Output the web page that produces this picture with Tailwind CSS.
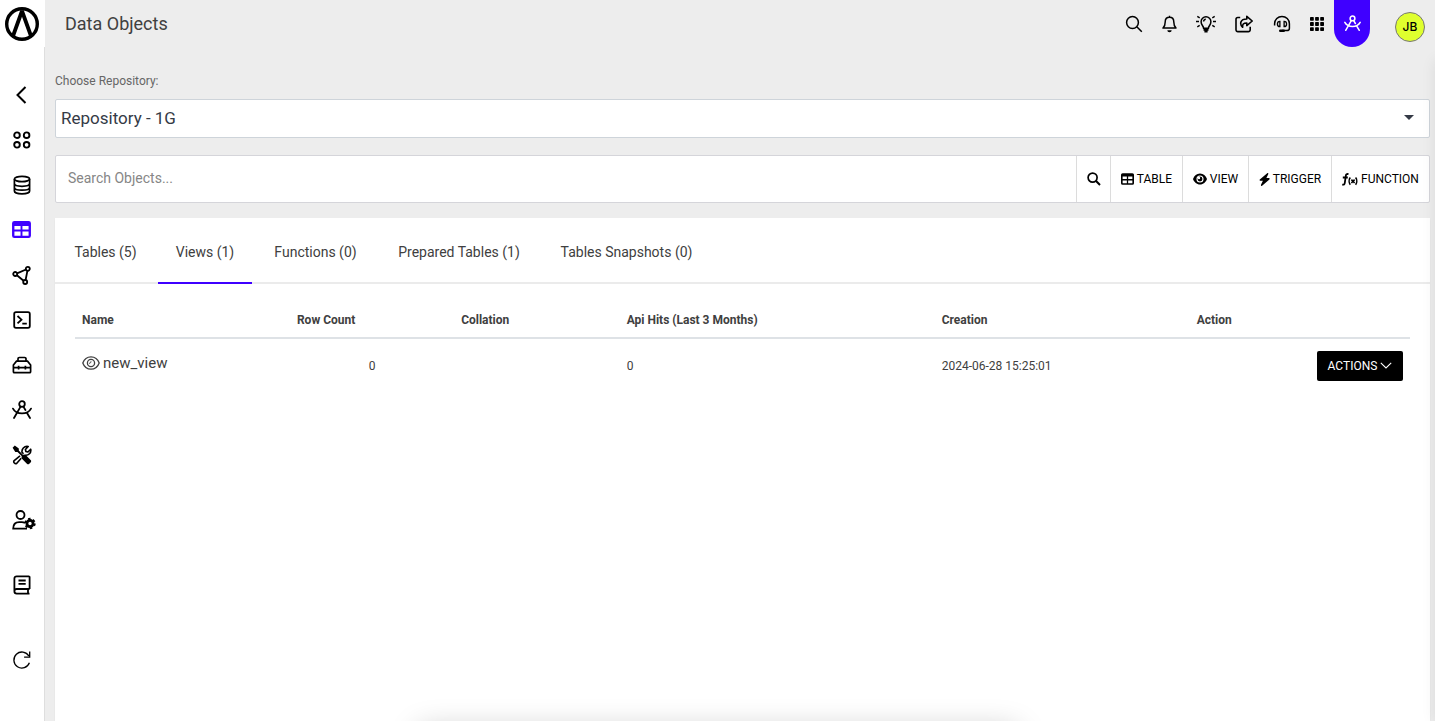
<!DOCTYPE html>
<html lang="en">
<head>
<meta charset="utf-8">
<meta name="viewport" content="width=device-width, initial-scale=1">
<title>Data Objects</title>
<script src="https://cdn.jsdelivr.net/npm/@tailwindcss/browser@4"></script>
</head>
<body class="relative flex min-h-screen overflow-hidden bg-[#ededed] font-['Roboto',sans-serif] text-[#404040]">

<!-- Shared shapes -->
<svg class="hidden" aria-hidden="true">
  <symbol id="compass" viewBox="0 0 20 20"><g fill="none" stroke="currentColor" stroke-width="1.8" stroke-linecap="round"><circle cx="10" cy="4" r="2.8"/><path d="M8.6 6.6 2 18M11.4 6.6l2 3.4M15 13l3 5M1 8.6c1.600 3 5 4.800 9 4.800s7.400-1.800 9-4.800"/></g></symbol>
  <symbol id="table" viewBox="0 0 20 18"><path fill="currentColor" fill-rule="evenodd" d="M2.500 0h15A2.500 2.500 0 0 1 20 2.500v13a2.500 2.500 0 0 1-2.500 2.500h-15A2.500 2.500 0 0 1 0 15.500v-13A2.500 2.500 0 0 1 2.500 0ZM2.500 5.200v3.800H9V5.200Zm8.500 0v3.800h6.500V5.200ZM2.500 11.200v4.300H9v-4.300Zm8.500 0v4.300h6.500v-4.300Z"/></symbol>
</svg>

<aside class="flex w-[45px] shrink-0 flex-col bg-white">
  <a href="#" aria-label="Home" class="flex h-[47px] items-center pl-[5px]">
    <svg class="size-[34px]" viewBox="0 0 34 34" fill="none" stroke="#000"><circle cx="17" cy="17" r="15.300" stroke-width="3.400"/><path d="M8 29 17 4l9 25" stroke-width="3.800" stroke-linejoin="bevel"/></svg>
  </a>
  <nav class="flex grow flex-col items-center border-r border-[#dedede] pt-[25px] pr-px text-black">
    <button aria-label="Collapse menu" class="flex h-[45px] w-full items-center justify-center"><svg class="size-5" viewBox="0 0 20 20" fill="none" stroke="currentColor" stroke-width="2"><path d="m13.500 2-8 8 8 8"/></svg></button>
    <a href="#" aria-label="Dashboard" class="flex h-[45px] w-full items-center justify-center"><svg class="size-5" viewBox="0 0 20 20" fill="none" stroke="currentColor" stroke-width="1.900"><circle cx="5" cy="5.200" r="2.800"/><circle cx="14.600" cy="5.200" r="2.800"/><circle cx="5" cy="14.800" r="2.800"/><circle cx="14.600" cy="14.800" r="2.800"/></svg></a>
    <a href="#" aria-label="Databases" class="flex h-[45px] w-full items-center justify-center"><svg class="size-5" viewBox="0 0 20 20" fill="none" stroke="currentColor" stroke-width="1.700"><ellipse cx="10" cy="4" rx="7.600" ry="2.700"/><path d="M2.400 4v12c0 1.600 3.400 2.900 7.600 2.900s7.600-1.300 7.600-2.900V4M2.400 8.600c0 1.600 3.400 2.700 7.600 2.700s7.600-1.100 7.600-2.700M2.400 12.500c0 1.600 3.400 2.700 7.600 2.700s7.600-1.100 7.600-2.700"/></svg></a>
    <a href="#" aria-label="Data objects" aria-current="page" class="flex h-[45px] w-full items-center justify-center text-[#3f00ff]"><svg class="h-[17px] w-[19px]"><use href="#table"/></svg></a>
    <a href="#" aria-label="Schema" class="flex h-[45px] w-full items-center justify-center"><svg class="size-5" viewBox="0 0 20 20" fill="none" stroke="currentColor" stroke-width="1.800"><circle cx="3.200" cy="9" r="2"/><circle cx="15.800" cy="3.800" r="2"/><circle cx="13.200" cy="17" r="2"/><path d="m5 8.300 9-3.800M15.400 5.800 13.600 15M4.900 10.200l6.700 5.600"/></svg></a>
    <a href="#" aria-label="Query" class="flex h-[45px] w-full items-center justify-center"><svg class="size-5" viewBox="0 0 20 20" fill="none" stroke="currentColor" stroke-width="1.800"><rect x="2.200" y="2.200" width="15.600" height="15.600" rx="1.800"/><path d="m5.500 6 4 3.700-4 3.700M10.300 13.600h4.500"/></svg></a>
    <a href="#" aria-label="Toolbox" class="flex h-[45px] w-full items-center justify-center"><svg class="size-5" viewBox="0 0 20 20" fill="none" stroke="currentColor" stroke-width="1.700"><path d="M6 6V3.800A1.300 1.300 0 0 1 7.300 2.500h5.400A1.300 1.300 0 0 1 14 3.800V6M1.400 16.700V10L4.500 6.200h11L18.600 10v6.700a1 1 0 0 1-1 1H2.400a1 1 0 0 1-1-1ZM1.400 12.600h17.200M6.600 10.800v3.800M13.400 10.800v3.800"/></svg></a>
    <a href="#" aria-label="Designer" class="flex h-[45px] w-full items-center justify-center"><svg class="size-5"><use href="#compass"/></svg></a>
    <a href="#" aria-label="Tools" class="flex h-[45px] w-full items-center justify-center"><svg class="size-5" viewBox="0 0 20 20"><path d="M11.500 8.800 10 7.300c-.500-2.800 2-6.600 6.200-5.800l-2.800 3 .5 2 2 .5 2.800-2.800c.8 3.600-2.200 6.600-5.800 6M8 10.800l-5.800 4.800a1.900 1.900 0 0 0 2.600 2.700l4.400-5" fill="none" stroke="currentColor" stroke-width="1.600" stroke-linejoin="round"/><path fill="currentColor" d="M.6 2.800 2.800.6l4 2.800v2.200l4.300 4.300c1-.5 2-.3 2.800.4l4.700 4.700c.8.800.8 1.600 0 2.400l-1.300 1.300c-.8.800-1.600.8-2.400 0l-4.700-4.700c-.7-.8-.9-1.800-.4-2.800L5.500 6.900H3.300Z"/></svg></a>
    <a href="#" aria-label="User settings" class="mt-5 flex h-[45px] w-full items-center justify-center pl-1"><svg class="h-5 w-6 shrink-0" viewBox="0 0 24 20"><g fill="none" stroke="currentColor" stroke-width="1.800"><circle cx="8.500" cy="5" r="4"/><path d="M15 18.600H1.200c0-4 2.300-6.500 6-6.500h2.600c1.300 0 2.400.3 3.200.8"/></g><circle cx="18" cy="13.500" r="3.100" fill="none" stroke="currentColor" stroke-width="2.800"/><circle cx="18" cy="13.500" r="4.700" fill="none" stroke="currentColor" stroke-width="2" stroke-dasharray="2.460 2.460"/></svg></a>
    <a href="#" aria-label="Documentation" class="mt-5 flex h-[45px] w-full items-center justify-center"><svg class="size-5" viewBox="0 0 20 20" fill="none" stroke="currentColor" stroke-width="1.800"><path d="M17.500 18.600H4.700a2.300 2.300 0 0 1 0-4.600h12.900M2.400 16.300V3.500a2.200 2.200 0 0 1 2.200-2.200h12.200a.8.800 0 0 1 .8.800V14M16 14v4.600M6.500 5.500h7.200M6.500 8.800h7.200"/></svg></a>
    <button aria-label="Refresh" class="mt-[30px] flex h-[45px] w-full items-center justify-center"><svg class="size-5" viewBox="0 0 20 20" fill="none" stroke="currentColor" stroke-width="1.300"><path d="M17.400 12.800a8 8 0 1 1-.6-6.800M17.700 1.500v5.600h-5.600"/></svg></button>
  </nav>
</aside>

<div class="flex min-w-0 grow flex-col">
  <header class="flex h-[47px] shrink-0 items-start pr-[10px] pl-5">
    <h1 class="grow text-lg leading-[47px]">Data Objects</h1>
    <div class="flex h-[47px] items-center text-black">
      <button aria-label="Search" class="flex w-9 justify-center"><svg class="size-[18px]" viewBox="0 0 18 18" fill="none" stroke="currentColor" stroke-width="1.500"><circle cx="7.500" cy="7.500" r="5.900"/><path d="m11.800 11.800 5 5"/></svg></button>
      <button aria-label="Notifications" class="flex w-[35px] justify-center"><svg class="size-[18px]" viewBox="0 0 18 18"><path d="M8.500 2.300c-3 0-4.300 2.100-4.300 4.600 0 3.600-1 5-2.200 6.200h13c-1.200-1.200-2.200-2.600-2.200-6.200 0-2.500-1.300-4.600-4.300-4.600ZM8.500.8v1.500" fill="none" stroke="currentColor" stroke-width="1.500" stroke-linejoin="round"/><path d="M6.300 15.300h4.400a2.200 1.900 0 0 1-4.400 0Z" fill="currentColor"/></svg></button>
      <button aria-label="Ideas" class="flex w-[38px] justify-center"><svg class="h-[18px] w-5" viewBox="0 0 20 18" fill="none" stroke="currentColor" stroke-width="1.500"><path d="M7.600 13.200c0-2.200-2.500-3-2.500-6.500a4.900 4.900 0 0 1 9.800 0c0 3.500-2.500 4.300-2.500 6.500ZM7.600 6.600c0-1.300.9-2.300 2.200-2.300M0 6.600h3M17 6.600h3M1.300 1.400l2.400 1.400M18.700 1.400l-2.400 1.400M1.300 11.800l2.400-1.400M18.700 11.800l-2.400-1.400"/><path d="M7.500 14.800h5M8.400 16.600h3.200" stroke-width="1.900"/></svg></button>
      <button aria-label="Share" class="flex w-[38px] justify-center"><svg class="size-[18px]" viewBox="0 0 18 18" fill="none" stroke="currentColor" stroke-width="1.600" stroke-linejoin="round"><path d="M5.200 2.500H2.800A1.800 1.800 0 0 0 1 4.300v10.500a1.800 1.800 0 0 0 1.800 1.800h10.600a1.800 1.800 0 0 0 1.800-1.800v-3"/><path d="M11.800 1.300 17.200 6l-5.400 4.600V8C8.300 8 7.300 9.200 7.700 12.300 4.200 9 5.300 4 11.800 4Z"/></svg></button>
      <button aria-label="Support" class="flex w-[37px] justify-center"><svg class="size-[18px]" viewBox="0 0 18 18" fill="none" stroke="currentColor" stroke-width="1.500"><path d="M1.600 10.500V8.800a7.400 7.400 0 0 1 14.800 0v4.400c0 1.500-1 2.400-2.500 2.400H9"/><path d="M6.900 6.300v5.400c-1.500 0-2.500-1.100-2.500-2.700s1-2.700 2.500-2.700ZM11.100 6.300v5.400c1.500 0 2.500-1.100 2.500-2.700s-1-2.700-2.500-2.700Z" stroke-width="1.300"/><path d="M7.300 15.700h3.400" stroke-width="2.600" stroke-linecap="round"/></svg></button>
      <button aria-label="Apps" class="flex w-[34px] justify-center"><svg class="size-[14px]" viewBox="0 0 14 14" fill="currentColor"><rect width="3.800" height="3.800" rx=".7"/><rect x="5.100" width="3.800" height="3.800" rx=".7"/><rect x="10.200" width="3.800" height="3.800" rx=".7"/><rect y="5.100" width="3.800" height="3.800" rx=".7"/><rect x="5.100" y="5.100" width="3.800" height="3.800" rx=".7"/><rect x="10.200" y="5.100" width="3.800" height="3.800" rx=".7"/><rect y="10.200" width="3.800" height="3.800" rx=".7"/><rect x="5.100" y="10.200" width="3.800" height="3.800" rx=".7"/><rect x="10.200" y="10.200" width="3.800" height="3.800" rx=".7"/></svg></button>
      <button aria-label="Designer" class="flex h-[47px] w-9 items-center justify-center rounded-b-full bg-[#3f00ff] text-white"><svg class="size-[17px]"><use href="#compass"/></svg></button>
      <button class="mt-[7px] ml-[25px] flex size-[30px] items-center justify-center rounded-full border border-[#777] bg-[#dfff2e] font-['Inter',sans-serif] text-xs font-medium text-black">JB</button>
    </div>
  </header>

  <main class="flex grow flex-col pr-[5px] pl-[10px]">
    <label for="repo" class="mt-6 text-xs leading-5 text-[#666]">Choose Repository:</label>
    <div class="relative mt-2">
      <select id="repo" class="h-[39px] w-full appearance-none rounded-xs border border-[#ced4da] bg-white px-[5px] text-[17px] text-[#343a46]"><option>Repository - 1G</option></select>
      <svg class="pointer-events-none absolute top-4 right-4 h-[5px] w-[10px]" viewBox="0 0 10 5" fill="#343a46"><path d="M0 0h10L5 5Z"/></svg>
    </div>

    <form class="mt-[17px] flex h-12 rounded-xs border border-[#d5d5da] bg-white text-xs text-black">
      <input type="search" aria-label="Search objects" placeholder="Search Objects..." class="min-w-0 grow px-3 pb-[2px] text-sm placeholder:text-[#868686]">
      <button type="button" aria-label="Search" class="flex w-[34px] items-center justify-center border-l border-[#dcdcdc]"><svg class="size-[14px]" viewBox="0 0 14 14" fill="none" stroke="currentColor" stroke-width="1.700"><circle cx="5.600" cy="5.600" r="4.500"/><path d="m8.800 8.800 4.200 4.200" stroke-width="2"/></svg></button>
      <button type="button" class="flex w-[72px] items-center justify-center gap-[3px] border-l border-[#dcdcdc]"><svg class="h-3 w-[13px]"><use href="#table"/></svg>TABLE</button>
      <button type="button" class="flex w-[66px] items-center justify-center gap-[3px] border-l border-[#dcdcdc]"><svg class="h-3 w-[14px]" viewBox="0 0 14 12"><path fill="currentColor" d="M7 .5C3.600.5 1.200 2.900 0 6c1.200 3.100 3.600 5.500 7 5.500S12.800 9.100 14 6C12.800 2.900 10.400.5 7 .5Z"/><circle cx="7" cy="6" r="3" fill="none" stroke="#fff" stroke-width="1.100"/><circle cx="6" cy="5" r="1.200" fill="#fff"/></svg>VIEW</button>
      <button type="button" class="flex w-[83px] items-center justify-center gap-[3px] border-l border-[#dcdcdc]"><svg class="h-[13px] w-[11px]" viewBox="0 0 11 13"><path fill="currentColor" d="M8.200.2.800 6.500c-.5.500-.2 1.300.4 1.300h2.700L2 11.800c-.3.900.4 1.500 1.100.9l7.300-6.300c.5-.5.200-1.300-.4-1.300H7.400L9.300 1.100C9.600.2 8.900-.3 8.200.2Z"/></svg>TRIGGER</button>
      <button type="button" class="flex w-[98px] items-center justify-center gap-[3px] border-l border-[#dcdcdc]"><svg class="h-[13px] w-4" viewBox="0 0 16 13" fill="none" stroke="currentColor" stroke-width="1.800"><path d="M6.500 1.100c-1.700-.4-2.500.2-2.700 1.700L2.800 9.800c-.2 1.500-1 2.200-2.600 1.800M.8 4.500h5"/><path stroke-width="1.600" d="M8.300 4.600c-1.500 1.900-1.500 5.200 0 7.200M13.600 4.600c1.500 1.900 1.500 5.200 0 7.200M9.400 6.600l3.200 3.400M12.600 6.600 9.400 10"/></svg>FUNCTION</button>
    </form>

    <section class="mt-[15px] grow bg-white shadow-xs">
      <div role="tablist" class="flex h-[66px] gap-[2px] border-b-2 border-[#ebebeb] text-sm">
        <button role="tab" class="w-[101px] pt-1">Tables (5)</button>
        <button role="tab" aria-selected="true" class="-mb-[2px] w-[94px] border-b-2 border-[#3f00ff] pt-1">Views (1)</button>
        <button role="tab" class="w-[123px] pt-1">Functions (0)</button>
        <button role="tab" class="w-40 pt-1">Prepared Tables (1)</button>
        <button role="tab" class="w-[171px] pt-1">Tables Snapshots (0)</button>
      </div>
      <div class="px-5 pt-[18px]">
        <table class="w-full table-fixed text-left text-xs">
          <thead>
            <tr class="h-9 border-b-2 border-[#dee2e6]">
              <th class="w-[16.100%] px-[7px]">Name</th>
              <th class="w-[12.300%] px-[7px]">Row Count</th>
              <th class="w-[12.400%] px-[7px]">Collation</th>
              <th class="w-[23.600%] px-[7px]">Api Hits (Last 3 Months)</th>
              <th class="w-[19.100%] px-[7px]">Creation</th>
              <th class="px-[7px]">Action</th>
            </tr>
          </thead>
          <tbody>
            <tr class="h-[54px]">
              <td class="px-[7px]"><a href="#" class="flex items-center gap-[3px] pb-[3px] text-[15px]"><svg class="mb-[2px] h-[14px] w-[18px]" viewBox="0 0 18 14" fill="none" stroke="currentColor" stroke-width="1.300"><path d="M9 .8C5 .8 2.100 3.400.8 7 2.100 10.600 5 13.200 9 13.200s6.900-2.600 8.200-6.200C15.900 3.400 13 .8 9 .8Z"/><circle cx="9" cy="7" r="3.600"/><path d="M7 7.300c1.300 0 2-.7 2-2" stroke-width="1"/></svg>new_view</a></td>
              <td class="px-[7px] text-center">0</td>
              <td class="px-[7px]"></td>
              <td class="px-[7px]">0</td>
              <td class="px-[7px]">2024-06-28 15:25:01</td>
              <td class="px-[7px]"><button class="ml-auto flex h-[30px] w-[86px] items-center justify-center gap-[3px] rounded-xs bg-black text-white">ACTIONS<svg class="h-[7px] w-3" viewBox="0 0 12 7" fill="none" stroke="currentColor" stroke-width="1.100"><path d="m.8.800 5.200 5.200L11.200.8"/></svg></button></td>
            </tr>
          </tbody>
        </table>
      </div>
    </section>
  </main>
</div>

<!-- Shadows cast by panels parked outside the window -->
<div class="pointer-events-none fixed top-full left-1/2 mt-2 h-12 w-[600px] -translate-x-1/2 rounded-md shadow-[0_0_30px_rgba(0,0,0,0.22)]"></div>
<div class="pointer-events-none fixed top-[60px] bottom-0 left-full w-12 shadow-[0_0_14px_rgba(0,0,0,0.08)]"></div>
</body>
</html>
